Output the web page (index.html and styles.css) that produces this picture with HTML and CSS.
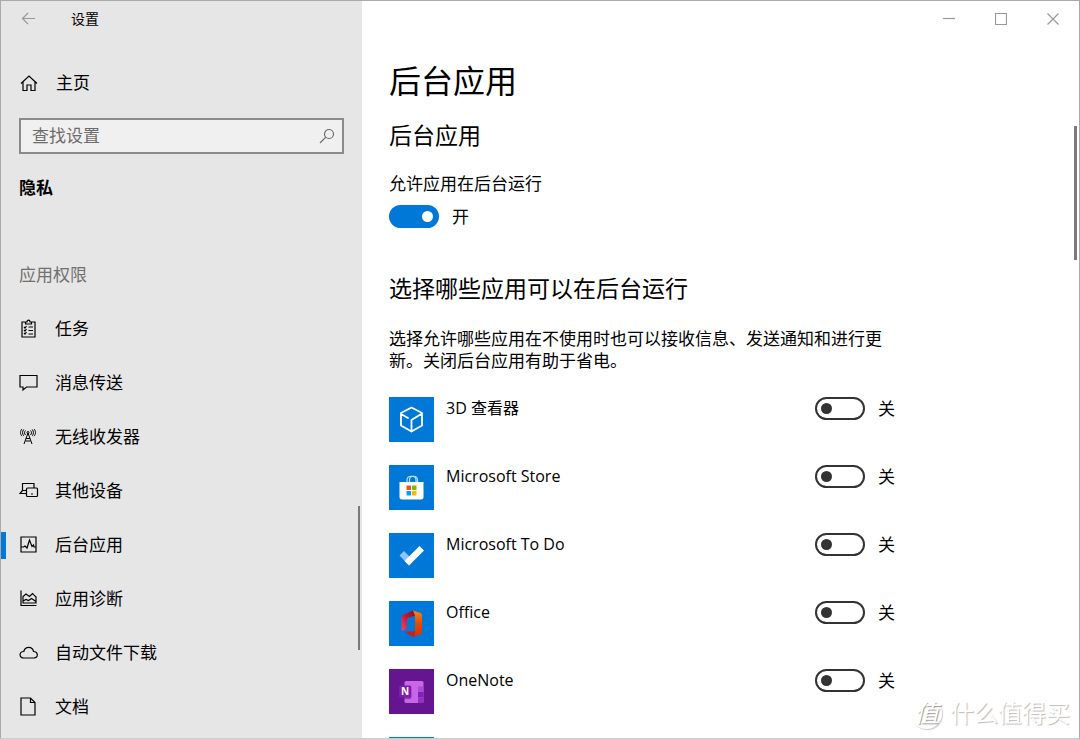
FILE: index.html
```html
<!DOCTYPE html>
<html lang="zh-CN">
<head>
<meta charset="utf-8">
<meta name="viewport" content="width=device-width, initial-scale=1">
<title>设置</title>
<link rel="stylesheet" href="styles.css">
</head>
<body>
<div class="window">
  <aside class="sidebar">
    <header class="sidebar-bar">
      <button class="back" type="button" aria-label="返回">
        <svg class="line" width="16" height="14" viewBox="0 0 16 14"><path d="M1.500 6.500H14M7 1L1.500 6.500 7 12"/></svg>
      </button>
      <span class="app-title">设置</span>
    </header>
    <a class="home" href="#">
      <svg class="line" width="20" height="20" viewBox="0 0 20 20"><path d="M2 10.500L10 3l8 7.500M4 9v8.500h4V12h4v5.500h4V9"/></svg>
      <span>主页</span>
    </a>
    <form class="search">
      <input class="search-input" type="text" placeholder="查找设置" aria-label="查找设置">
      <button class="search-button" type="button" aria-label="搜索">
        <svg class="line" width="16" height="16" viewBox="0 0 16 16"><circle cx="10" cy="6" r="4.500"/><path d="M6.800 9.200L1 15"/></svg>
      </button>
    </form>
    <h2 class="section">隐私</h2>
    <h3 class="group">应用权限</h3>
    <nav class="nav">
      <a class="nav-item" href="#">
        <svg class="line" width="20" height="20" viewBox="0 0 20 20"><path d="M6.500 3H3V18H16V3H12.500M6.500 5V3H8C8 .5 11 .5 11 3h1.500v2zM5 8l1 1 1.500-2M5 11l1 1 1.500-2M5 14l1 1 1.500-2M9.500 8H14M9.500 11.500H14M9.500 15H14"/></svg>
        <span>任务</span>
      </a>
      <a class="nav-item" href="#">
        <svg class="line" width="20" height="20" viewBox="0 0 20 20"><path d="M1 2.500H18V14H7.500L4 17V14H1z"/></svg>
        <span>消息传送</span>
      </a>
      <a class="nav-item" href="#">
        <svg class="line" width="20" height="20" viewBox="0 0 20 20"><g stroke-width="1"><path d="M9 6L5 17M9 6L13 17M7 11.500h4M6.500 14h5"/><circle cx="9" cy="5.500" r="1"/><path d="M6.500 8c-1.300-1.200-1.300-3.300 0-4.500M11.500 8c1.300-1.200 1.300-3.300 0-4.500M4.700 8.800C3.200 7 3.200 4.500 4.700 2.500M13.300 8.800c1.500-1.800 1.500-4.300 0-6.300M3 9.200C1 7 1 4.200 3 2M15 9.200c2-2.200 2-5 0-7.200"/></g></svg>
        <span>无线收发器</span>
      </a>
      <a class="nav-item" href="#">
        <svg class="line" width="20" height="20" viewBox="0 0 20 20"><path d="M3.500 9.500V2.500H15V7M3.500 9.500L1 12.500H7.500M3.500 9.500H7.500M8.500 7h9q1 0 1 1v6.500q0 1-1 1h-9q-1 0-1-1V8q0-1 1-1zM12 13h2"/></svg>
        <span>其他设备</span>
      </a>
      <a class="nav-item active" href="#" aria-current="page">
        <svg class="line" width="20" height="20" viewBox="0 0 20 20"><path d="M2 2H17V17H2zM2 12H4.500L6 11l2 2 2.500-8 2.500 6.500 1.500-1.500L15 12h2"/></svg>
        <span>后台应用</span>
      </a>
      <a class="nav-item" href="#">
        <svg class="line" width="20" height="20" viewBox="0 0 20 20"><path d="M2 1.500V16.500H17.500M4 14V7.500L7 5l3.500 2.500 3-3L17 8v6zM4 12l3-1.500 2.500 1 3-2 4.500 3"/></svg>
        <span>应用诊断</span>
      </a>
      <a class="nav-item" href="#">
        <svg class="line" width="20" height="20" viewBox="0 0 20 20"><path d="M5 15C-.5 15 0 8.300 4.800 8.500 6 3 13.500 3 14.500 8.500c5 .3 5 6.500.5 6.500z"/></svg>
        <span>自动文件下载</span>
      </a>
      <a class="nav-item" href="#">
        <svg class="line" width="20" height="20" viewBox="0 0 20 20"><path d="M2 1H11.500L16 5.500V18H2zM11.500 1V5.500H16"/></svg>
        <span>文档</span>
      </a>
    </nav>
    <div class="thumb sidebar-thumb"></div>
  </aside>

  <main class="main">
    <header class="controls">
      <button class="control" type="button" aria-label="最小化"><svg class="line" width="12" height="12" viewBox="0 0 12 12"><path d="M0 5.500H12"/></svg></button>
      <button class="control" type="button" aria-label="最大化"><svg class="line" width="12" height="12" viewBox="0 0 12 12"><path d="M.5.5H11.500V11.500H.5z"/></svg></button>
      <button class="control" type="button" aria-label="关闭"><svg class="line" width="12" height="12" viewBox="0 0 12 12"><path d="M.5.5l11 11M11.500.5l-11 11"/></svg></button>
    </header>
    <div class="content">
      <h1 class="page-title">后台应用</h1>
      <h2 class="heading">后台应用</h2>
      <label class="master-label" for="master">允许应用在后台运行</label>
      <div class="switch-row">
        <input class="switch" id="master" type="checkbox" role="switch" checked>
        <span>开</span>
      </div>
      <h2 class="heading choose">选择哪些应用可以在后台运行</h2>
      <p class="description">选择允许哪些应用在不使用时也可以接收信息、发送通知和进行更新。关闭后台应用有助于省电。</p>
      <ul class="apps">
        <li class="app">
          <svg class="tile" viewBox="0 0 45 45"><g fill="none" stroke="#fff" stroke-width="1.800" stroke-linejoin="round" stroke-linecap="round"><path d="M22.500 10.500l10.500 5.500v12.500L22.500 34.500 12 28.500V16zM22.500 34.500V23L33 16.500M12 17l7 4"/></g></svg>
          <label class="app-name" for="app1">3D 查看器</label>
          <div class="switch-row"><input class="switch" id="app1" type="checkbox" role="switch"><span>关</span></div>
        </li>
        <li class="app">
          <svg class="tile" viewBox="0 0 45 45"><path d="M18 18v-3c0-5 9-5 9 0v3M20.500 17v-2c0-5 8-5 8 0v2" fill="none" stroke="#b9dcf8" stroke-width="1.200"/><path d="M10.500 17h24v15q0 2.500-2.500 2.500H13q-2.500 0-2.500-2.500z" fill="#fff"/><path d="M17.500 20.500h4.500v4.500h-4.500z" fill="#f25022"/><path d="M23 20.500h4.500v4.500H23z" fill="#7fba00"/><path d="M17.500 26h4.500v4.500h-4.500z" fill="#00a4ef"/><path d="M23 26h4.500v4.500H23z" fill="#ffb900"/></svg>
          <label class="app-name" for="app2">Microsoft Store</label>
          <div class="switch-row"><input class="switch" id="app2" type="checkbox" role="switch"><span>关</span></div>
        </li>
        <li class="app">
          <svg class="tile" viewBox="0 0 45 45"><path d="M15 18l9.500 9.500-4.500 5L10.500 22.500z" fill="#8cc5f3"/><path d="M30.500 13l4.500 4.500L20 32.500l-4.500-4.500z" fill="#fff"/></svg>
          <label class="app-name" for="app3">Microsoft To Do</label>
          <div class="switch-row"><input class="switch" id="app3" type="checkbox" role="switch"><span>关</span></div>
        </li>
        <li class="app">
          <svg class="tile" viewBox="0 0 45 45"><defs><linearGradient id="office-left" x1="0" y1="1" x2="1" y2="0"><stop offset="0" stop-color="#ee4a72"/><stop offset=".5" stop-color="#c9182c"/><stop offset="1" stop-color="#861018"/></linearGradient><linearGradient id="office-right" x1="0" y1="0" x2="0" y2="1"><stop offset="0" stop-color="#f58a13"/><stop offset=".5" stop-color="#df4b0b"/><stop offset="1" stop-color="#d33504"/></linearGradient></defs><path d="M24 9.500l-10 4.500q-1.500.8-1.500 2.500v11.500q0 2 1.500 1.700l4-2.200V17.500l8-3z" fill="url(#office-left)"/><path d="M24 9.500l7.500 2.500q1.500.5 1.500 2v17.500q0 1.500-1.500 2L24 35.500l2-5V14z" fill="url(#office-right)"/><path d="M16 31l10-1v4.500q-1 1.500-3 1z" fill="#c61f25"/></svg>
          <label class="app-name" for="app4">Office</label>
          <div class="switch-row"><input class="switch" id="app4" type="checkbox" role="switch"><span>关</span></div>
        </li>
        <li class="app">
          <svg class="tile onenote" viewBox="0 0 45 45"><path d="M17 12h16q1.500 0 1.500 1.500v19q0 1.500-1.500 1.500H17q-1.500 0-1.500-1.500v-19q0-1.500 1.500-1.500z" fill="#c966e8"/><path d="M29 17.500h5.500V23H29z" fill="#ae4bd5"/><path d="M29 23h5.500v5.500H29z" fill="#7b24b5"/><path d="M29 28.500h5.500v4q0 1.500-1.500 1.500h-4z" fill="#9332bf"/><path d="M15.500 17h5q2 0 2 2v9q0 2-2 2h-5z" fill="#4c0d70" opacity=".5"/><rect x="10" y="16.500" width="12" height="12" rx="1" fill="#7a1eae"/><text class="tile-letter" x="16" y="26">N</text></svg>
          <label class="app-name" for="app5">OneNote</label>
          <div class="switch-row"><input class="switch" id="app5" type="checkbox" role="switch"><span>关</span></div>
        </li>
        <li class="app">
          <svg class="tile" viewBox="0 0 45 45"></svg>
        </li>
      </ul>
    </div>
    <div class="thumb main-thumb"></div>
  </main>
  <div class="watermark"><span class="watermark-seal">值</span><span>什么值得买</span></div>
</div>
</body>
</html>
```
FILE: styles.css
```css
* {
  box-sizing: border-box;
}

body {
  margin: 0;
  background: #fff;
  color: #000;
  font: 17px/22px "Open Sans", "Noto Sans CJK SC", sans-serif;
}

h1, h2, h3, p, ul {
  margin: 0;
  padding: 0;
  font-weight: 400;
}

button {
  display: flex;
  align-items: center;
  justify-content: center;
  padding: 0;
  border: 0;
  background: none;
  color: inherit;
}

a {
  color: inherit;
  text-decoration: none;
}

.line {
  flex: none;
  fill: none;
  stroke: currentColor;
  stroke-width: 1.2;
}

.window {
  position: relative;
  display: grid;
  grid-template-columns: 361px 1fr;
  grid-template-rows: 100%;
  height: 100vh;
  border: 1px solid #aaa;
  border-bottom-color: #ccc;
  overflow: hidden;
}

.sidebar {
  position: relative;
  background: #e6e6e6;
  overflow: hidden;
}

.sidebar-bar {
  display: flex;
  align-items: center;
  gap: 34px;
  height: 36px;
  padding-left: 20px;
}

.back {
  color: #999;
}

.app-title {
  font-size: 14px;
}

.home {
  display: flex;
  align-items: center;
  gap: 17px;
  height: 44px;
  margin-top: 24px;
  padding-left: 18px;
}

.search {
  display: flex;
  height: 36px;
  margin: 13px 18px 0 18px;
  border: 2px solid #8a8a8a;
  background: #f0f0f0;
}

.search-input {
  flex: 1;
  min-width: 0;
  padding: 0 0 0 11px;
  border: 0;
  background: none;
  font: inherit;
}

.search-input::placeholder {
  color: #6c6c6c;
}

.search-button {
  width: 30px;
  color: #6c6c6c;
}

.section,
.group {
  margin-left: 18px;
  font-size: 17px;
}

.section {
  margin-top: 23px;
  font-weight: 700;
}

.group {
  margin-top: 65px;
  color: #707070;
}

.nav {
  margin-top: 16px;
}

.nav-item {
  display: flex;
  align-items: center;
  gap: 16px;
  height: 54px;
  padding-left: 18px;
}

.active {
  background: linear-gradient(#0078d7, #0078d7) left center / 5px 27px no-repeat;
}

.thumb {
  position: absolute;
  background: #7a7a7a;
}

.sidebar-thumb {
  top: 505px;
  right: 2px;
  width: 2px;
  height: 144px;
}

.main {
  position: relative;
  overflow: hidden;
}

.main-thumb {
  top: 125px;
  right: 2px;
  width: 3px;
  height: 134px;
}

.controls {
  display: flex;
  justify-content: flex-end;
  height: 36px;
}

.control {
  width: 52px;
  color: #999;
}

.content {
  max-width: 533px;
  padding: 24px 0 0 27px;
}

.page-title {
  font-size: 32px;
  line-height: 40px;
}

.heading {
  margin-top: 18px;
  font-size: 23px;
  line-height: 32px;
}

.master-label {
  display: block;
  margin: 22px 0 10px;
}

.choose {
  margin-top: 44px;
}

.description {
  margin-top: 24px;
}

.switch-row {
  display: flex;
  align-items: center;
  gap: 13px;
  height: 23px;
}

.switch {
  display: flex;
  align-items: center;
  width: 50px;
  height: 23px;
  margin: 0;
  padding: 0 4px;
  appearance: none;
  border: 2px solid #333;
  border-radius: 12px;
  background: #fff;
}

.switch::before {
  content: "";
  width: 11px;
  height: 11px;
  border-radius: 50%;
  background: #333;
}

.switch:checked {
  justify-content: flex-end;
  border-color: #0078d7;
  background: #0078d7;
}

.switch:checked::before {
  background: #fff;
}

.apps {
  display: grid;
  gap: 23px;
  margin-top: 25px;
  list-style: none;
}

.app {
  display: flex;
  gap: 12px;
}

.tile {
  flex: none;
  width: 45px;
  height: 45px;
  background: #0078d7;
}

.onenote {
  background: #65158f;
}

.tile-letter {
  fill: #fff;
  font-size: 10px;
  font-weight: 700;
  text-anchor: middle;
}

.app-name {
  flex: 1;
  font-size: 16px;
}

.watermark {
  position: absolute;
  right: 9px;
  bottom: 9px;
  display: flex;
  align-items: center;
  gap: 8px;
  color: #fff;
  font-size: 24px;
  line-height: 32px;
  text-shadow: 1px 1px 1px #bbb;
}

.watermark-seal {
  width: 31px;
  height: 31px;
  border-radius: 50%;
  box-shadow: 1px 1px 1px #ccc;
  font-style: italic;
  line-height: 30px;
  text-align: center;
  text-shadow: 1px 1px 1px #999;
}
```
